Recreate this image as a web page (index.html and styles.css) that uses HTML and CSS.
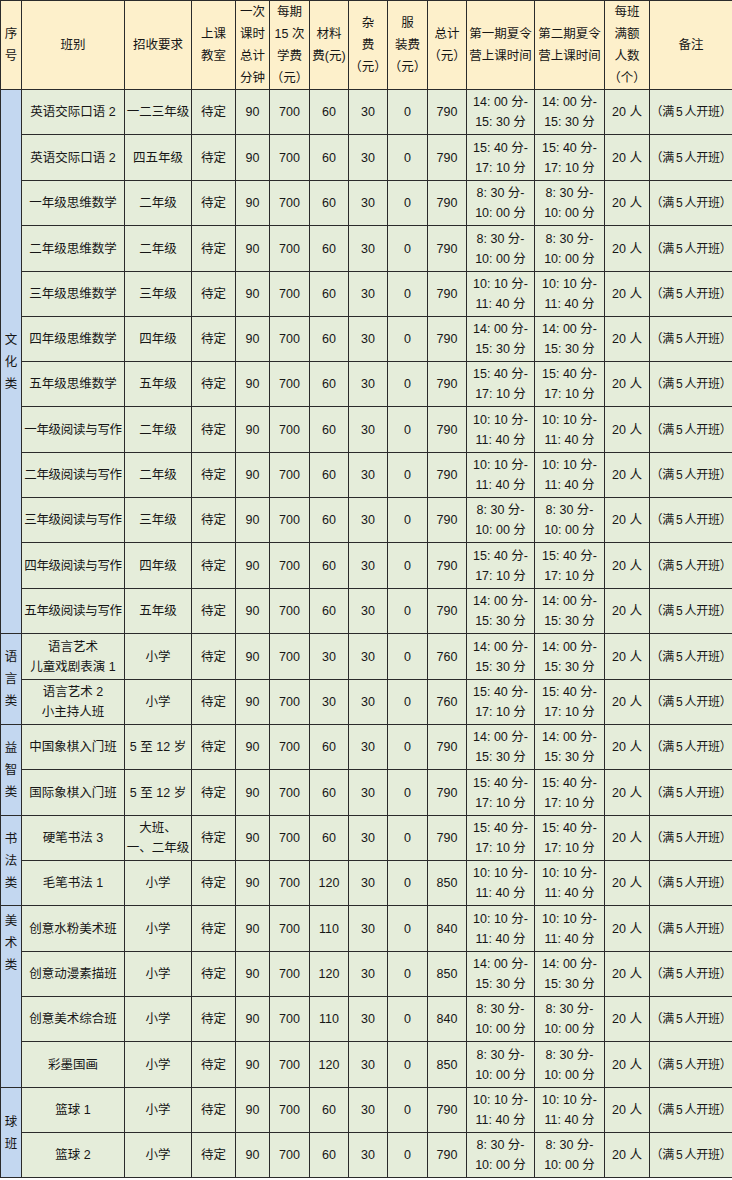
FILE: index.html
```html
<!DOCTYPE html>
<html lang="zh-CN">
<head>
<meta charset="utf-8">
<title>夏令营课程表</title>
<link rel="stylesheet" href="styles.css">
</head>
<body>
<table class="sched">
  <colgroup>
    <col class="c1"><col class="c2"><col class="c3"><col class="c4"><col class="c5"><col class="c6"><col class="c7">
    <col class="c8"><col class="c9"><col class="c10"><col class="c11"><col class="c12"><col class="c13"><col class="c14">
  </colgroup>
  <thead>
    <tr class="head">
      <th>序<br>号</th>
      <th>班别</th>
      <th>招收要求</th>
      <th>上课<br>教室</th>
      <th>一次<br>课时<br>总计<br>分钟</th>
      <th>每期<br>15 次<br>学费<br>（元）</th>
      <th>材料<br>费(元)</th>
      <th>杂<br>费<br>（元）</th>
      <th>服<br>装费<br>（元）</th>
      <th>总计<br>（元）</th>
      <th>第一期夏令<br>营上课时间</th>
      <th>第二期夏令<br>营上课时间</th>
      <th>每班<br>满额<br>人数<br>（个）</th>
      <th>备注</th>
    </tr>
  </thead>
  <tbody>
    <tr class="r45"><td class="cat" rowspan="12">文<br>化<br>类</td><td>英语交际口语 2</td><td>一二三年级</td><td>待定</td><td>90</td><td>700</td><td>60</td><td>30</td><td>0</td><td>790</td><td>14: 00 分-<br>15: 30 分</td><td>14: 00 分-<br>15: 30 分</td><td>20 人</td><td class="note">（满&#8201;5&#8201;人开班）</td></tr>
    <tr class="r46"><td>英语交际口语 2</td><td>四五年级</td><td>待定</td><td>90</td><td>700</td><td>60</td><td>30</td><td>0</td><td>790</td><td>15: 40 分-<br>17: 10 分</td><td>15: 40 分-<br>17: 10 分</td><td>20 人</td><td class="note">（满&#8201;5&#8201;人开班）</td></tr>
    <tr class="r45"><td>一年级思维数学</td><td>二年级</td><td>待定</td><td>90</td><td>700</td><td>60</td><td>30</td><td>0</td><td>790</td><td>8: 30 分-<br>10: 00 分</td><td>8: 30 分-<br>10: 00 分</td><td>20 人</td><td class="note">（满&#8201;5&#8201;人开班）</td></tr>
    <tr class="r46"><td>二年级思维数学</td><td>二年级</td><td>待定</td><td>90</td><td>700</td><td>60</td><td>30</td><td>0</td><td>790</td><td>8: 30 分-<br>10: 00 分</td><td>8: 30 分-<br>10: 00 分</td><td>20 人</td><td class="note">（满&#8201;5&#8201;人开班）</td></tr>
    <tr class="r45"><td>三年级思维数学</td><td>三年级</td><td>待定</td><td>90</td><td>700</td><td>60</td><td>30</td><td>0</td><td>790</td><td>10: 10 分-<br>11: 40 分</td><td>10: 10 分-<br>11: 40 分</td><td>20 人</td><td class="note">（满&#8201;5&#8201;人开班）</td></tr>
    <tr class="r45"><td>四年级思维数学</td><td>四年级</td><td>待定</td><td>90</td><td>700</td><td>60</td><td>30</td><td>0</td><td>790</td><td>14: 00 分-<br>15: 30 分</td><td>14: 00 分-<br>15: 30 分</td><td>20 人</td><td class="note">（满&#8201;5&#8201;人开班）</td></tr>
    <tr class="r45"><td>五年级思维数学</td><td>五年级</td><td>待定</td><td>90</td><td>700</td><td>60</td><td>30</td><td>0</td><td>790</td><td>15: 40 分-<br>17: 10 分</td><td>15: 40 分-<br>17: 10 分</td><td>20 人</td><td class="note">（满&#8201;5&#8201;人开班）</td></tr>
    <tr class="r46"><td class="tight">一年级阅读与写作</td><td>二年级</td><td>待定</td><td>90</td><td>700</td><td>60</td><td>30</td><td>0</td><td>790</td><td>10: 10 分-<br>11: 40 分</td><td>10: 10 分-<br>11: 40 分</td><td>20 人</td><td class="note">（满&#8201;5&#8201;人开班）</td></tr>
    <tr class="r45"><td class="tight">二年级阅读与写作</td><td>二年级</td><td>待定</td><td>90</td><td>700</td><td>60</td><td>30</td><td>0</td><td>790</td><td>10: 10 分-<br>11: 40 分</td><td>10: 10 分-<br>11: 40 分</td><td>20 人</td><td class="note">（满&#8201;5&#8201;人开班）</td></tr>
    <tr class="r45"><td class="tight">三年级阅读与写作</td><td>三年级</td><td>待定</td><td>90</td><td>700</td><td>60</td><td>30</td><td>0</td><td>790</td><td>8: 30 分-<br>10: 00 分</td><td>8: 30 分-<br>10: 00 分</td><td>20 人</td><td class="note">（满&#8201;5&#8201;人开班）</td></tr>
    <tr class="r46"><td class="tight">四年级阅读与写作</td><td>四年级</td><td>待定</td><td>90</td><td>700</td><td>60</td><td>30</td><td>0</td><td>790</td><td>15: 40 分-<br>17: 10 分</td><td>15: 40 分-<br>17: 10 分</td><td>20 人</td><td class="note">（满&#8201;5&#8201;人开班）</td></tr>
    <tr class="r45"><td class="tight">五年级阅读与写作</td><td>五年级</td><td>待定</td><td>90</td><td>700</td><td>60</td><td>30</td><td>0</td><td>790</td><td>14: 00 分-<br>15: 30 分</td><td>14: 00 分-<br>15: 30 分</td><td>20 人</td><td class="note">（满&#8201;5&#8201;人开班）</td></tr>

    <tr class="r46"><td class="cat" rowspan="2">语<br>言<br>类</td><td>语言艺术<br>儿童戏剧表演 1</td><td>小学</td><td>待定</td><td>90</td><td>700</td><td>30</td><td>30</td><td>0</td><td>760</td><td>14: 00 分-<br>15: 30 分</td><td>14: 00 分-<br>15: 30 分</td><td>20 人</td><td class="note">（满&#8201;5&#8201;人开班）</td></tr>
    <tr class="r45"><td>语言艺术 2<br>小主持人班</td><td>小学</td><td>待定</td><td>90</td><td>700</td><td>30</td><td>30</td><td>0</td><td>760</td><td>15: 40 分-<br>17: 10 分</td><td>15: 40 分-<br>17: 10 分</td><td>20 人</td><td class="note">（满&#8201;5&#8201;人开班）</td></tr>

    <tr class="r45"><td class="cat" rowspan="2">益<br>智<br>类</td><td>中国象棋入门班</td><td>5 至 12 岁</td><td>待定</td><td>90</td><td>700</td><td>60</td><td>30</td><td>0</td><td>790</td><td>14: 00 分-<br>15: 30 分</td><td>14: 00 分-<br>15: 30 分</td><td>20 人</td><td class="note">（满&#8201;5&#8201;人开班）</td></tr>
    <tr class="r46"><td>国际象棋入门班</td><td>5 至 12 岁</td><td>待定</td><td>90</td><td>700</td><td>60</td><td>30</td><td>0</td><td>790</td><td>15: 40 分-<br>17: 10 分</td><td>15: 40 分-<br>17: 10 分</td><td>20 人</td><td class="note">（满&#8201;5&#8201;人开班）</td></tr>

    <tr class="r45"><td class="cat" rowspan="2">书<br>法<br>类</td><td>硬笔书法 3</td><td>大班、<br>一、二年级</td><td>待定</td><td>90</td><td>700</td><td>60</td><td>30</td><td>0</td><td>790</td><td>15: 40 分-<br>17: 10 分</td><td>15: 40 分-<br>17: 10 分</td><td>20 人</td><td class="note">（满&#8201;5&#8201;人开班）</td></tr>
    <tr class="r45"><td>毛笔书法 1</td><td>小学</td><td>待定</td><td>90</td><td>700</td><td>120</td><td>30</td><td>0</td><td>850</td><td>10: 10 分-<br>11: 40 分</td><td>10: 10 分-<br>11: 40 分</td><td>20 人</td><td class="note">（满&#8201;5&#8201;人开班）</td></tr>

    <tr class="r46"><td class="cat cat-top" rowspan="4">美<br>术<br>类</td><td>创意水粉美术班</td><td>小学</td><td>待定</td><td>90</td><td>700</td><td>110</td><td>30</td><td>0</td><td>840</td><td>10: 10 分-<br>11: 40 分</td><td>10: 10 分-<br>11: 40 分</td><td>20 人</td><td class="note">（满&#8201;5&#8201;人开班）</td></tr>
    <tr class="r45"><td>创意动漫素描班</td><td>小学</td><td>待定</td><td>90</td><td>700</td><td>120</td><td>30</td><td>0</td><td>850</td><td>14: 00 分-<br>15: 30 分</td><td>14: 00 分-<br>15: 30 分</td><td>20 人</td><td class="note">（满&#8201;5&#8201;人开班）</td></tr>
    <tr class="r45"><td>创意美术综合班</td><td>小学</td><td>待定</td><td>90</td><td>700</td><td>110</td><td>30</td><td>0</td><td>840</td><td>8: 30 分-<br>10: 00 分</td><td>8: 30 分-<br>10: 00 分</td><td>20 人</td><td class="note">（满&#8201;5&#8201;人开班）</td></tr>
    <tr class="r46"><td>彩墨国画</td><td>小学</td><td>待定</td><td>90</td><td>700</td><td>120</td><td>30</td><td>0</td><td>850</td><td>8: 30 分-<br>10: 00 分</td><td>8: 30 分-<br>10: 00 分</td><td>20 人</td><td class="note">（满&#8201;5&#8201;人开班）</td></tr>

    <tr class="r45"><td class="cat" rowspan="2">球<br>班</td><td>篮球 1</td><td>小学</td><td>待定</td><td>90</td><td>700</td><td>60</td><td>30</td><td>0</td><td>790</td><td>10: 10 分-<br>11: 40 分</td><td>10: 10 分-<br>11: 40 分</td><td>20 人</td><td class="note">（满&#8201;5&#8201;人开班）</td></tr>
    <tr class="r45"><td>篮球 2</td><td>小学</td><td>待定</td><td>90</td><td>700</td><td>60</td><td>30</td><td>0</td><td>790</td><td>8: 30 分-<br>10: 00 分</td><td>8: 30 分-<br>10: 00 分</td><td>20 人</td><td class="note">（满&#8201;5&#8201;人开班）</td></tr>
  </tbody>
</table>
</body>
</html>
```

FILE: styles.css
```css
html, body {
  margin: 0;
  padding: 0;
  background: #ffffff;
}

.sched {
  border-collapse: collapse;
  table-layout: fixed;
  width: 732px;
  font-family: "Liberation Sans", "Noto Sans CJK SC", sans-serif;
  font-size: 12.5px;
  color: #161616;
}

.c1 { width: 21px; }
.c2 { width: 103px; }
.c3 { width: 67px; }
.c4 { width: 44px; }
.c5 { width: 34px; }
.c6 { width: 40px; }
.c7 { width: 39px; }
.c8 { width: 39px; }
.c9 { width: 40px; }
.c10 { width: 39px; }
.c11 { width: 68px; }
.c12 { width: 70px; }
.c13 { width: 45px; }
.c14 { width: 83px; }

.sched th,
.sched td {
  border: 1px solid #2b2b2b;
  padding: 0;
  text-align: center;
  vertical-align: middle;
  white-space: nowrap;
  overflow: hidden;
}

.sched th {
  background: #fdf0cb;
  font-weight: normal;
  line-height: 22px;
  height: 88px;
}

.sched td {
  background: #e5edda;
  line-height: 20px;
}

.r45 td { height: 44px; }
.r46 td { height: 45px; }

.sched td.cat {
  background: #c3d7f0;
  line-height: 22px;
}

.sched td.cat-top {
  vertical-align: top;
  padding-top: 4px;
}

.sched td.tight {
  letter-spacing: -0.3px;
}

.sched td.note {
  font-size: 12px;
  letter-spacing: -0.3px;
}
```
